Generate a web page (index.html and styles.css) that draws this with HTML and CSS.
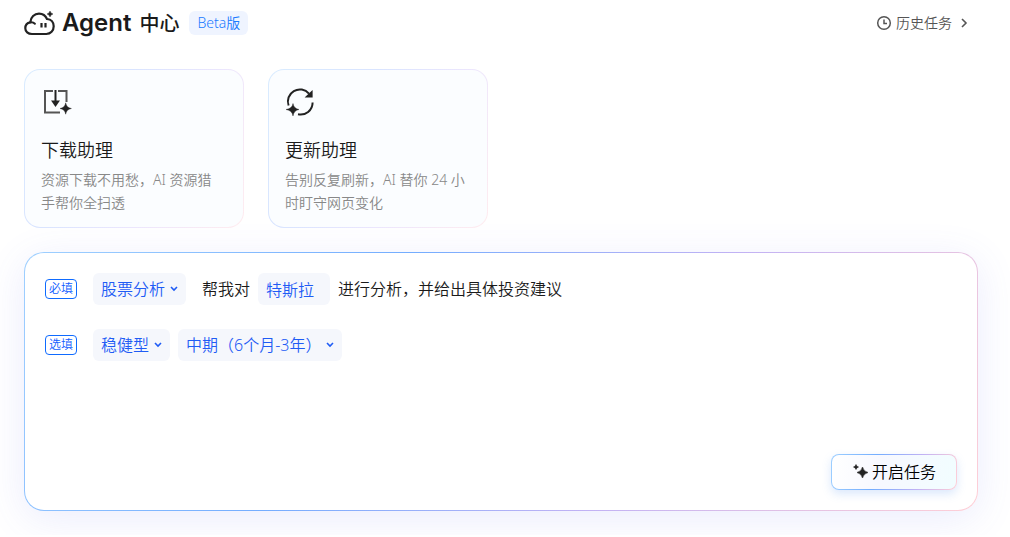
FILE: index.html
```html
<!DOCTYPE html>
<html lang="zh-CN">
    <head>
        <meta charset="UTF-8">
        <meta name="viewport" content="width=device-width, initial-scale=1.0">
        <title>Agent 中心</title>
        <link rel="stylesheet" href="styles.css">
    </head>
    <body>
        <header class="header">
            <svg class="logo" viewBox="0 0 32 28" aria-hidden="true">
                <path d="M8 25 C4 25 1.3 22.5 1.3 19.2 C1.3 16 3.5 13.8 6.3 13.3 C6.6 8 10.5 4.6 15 4.6 C18.8 4.6 21.6 6.6 23 10 C27.2 10.4 29.7 13.4 29.7 17.3 C29.7 21.8 26.6 25 22.3 25 Z" fill="none" stroke="#222" stroke-width="2.2"/>
                <path d="M6.3 13.3 C8.3 13 9.8 13.6 10.9 14.8" fill="none" stroke="#222" stroke-width="2" stroke-linecap="round"/>
                <path d="M17.5 14v4.500M21.5 14v4.500" stroke="#222" stroke-width="2.2"/>
                <path d="M26 2 Q26.6 4.4 29 5 Q26.6 5.6 26 8 Q25.4 5.6 23 5 Q25.4 4.4 26 2Z" fill="#222" stroke="#222" stroke-width="0.4"/>
            </svg>
            <h1 class="title"><span class="title-en">Agent</span> <span class="title-cn">中心</span></h1>
            <span class="beta">Beta版</span>
            <a class="history" href="#">
                <svg class="icon-clock" viewBox="0 0 16 16" aria-hidden="true">
                    <circle cx="8" cy="8" r="6.3"/>
                    <path d="M8 4.5v4h3"/>
                </svg>
                历史任务
                <svg class="icon-arrow" viewBox="0 0 8 12" aria-hidden="true"><path d="M2 2l4 4L2 10"/></svg>
            </a>
        </header>

        <main>
            <div class="cards">
                <a class="card" href="#">
                    <svg class="card-icon" viewBox="0 0 32 32" aria-hidden="true">
                        <path d="M12 5H4v21.5h15M17 5h8.5v11" fill="none" stroke="#555" stroke-width="2"/>
                        <path d="M14.5 4v12" fill="none" stroke="#222" stroke-width="2"/>
                        <path d="M10 14.5h9L14.5 21Z" fill="#222"/>
                        <path d="M24.7 16.8 Q25.5 21.7 30.4 22.5 Q25.5 23.3 24.7 28.2 Q23.9 23.3 19 22.5 Q23.9 21.7 24.7 16.8Z" fill="#222" stroke="#222" stroke-width="0.4"/>
                    </svg>
                    <h2>下载助理</h2>
                    <p>资源下载不用愁，AI 资源猎手帮你全扫透</p>
                </a>
                <a class="card" href="#">
                    <svg class="card-icon" viewBox="0 0 32 32" aria-hidden="true">
                        <path d="M3.6 19.5A12 12 0 0 1 24 7.6M27.6 16.5A12 12 0 0 1 13 28.3" fill="none" stroke="#222" stroke-width="2"/>
                        <path d="M27.6 4v7.5h-8Z" fill="#222"/>
                        <path d="M8 17.5 Q8.9 22.6 14 23.5 Q8.9 24.4 8 30 Q7.1 24.4 1 23.5 Q7.1 22.6 8 17.5Z" fill="#222" stroke="#222" stroke-width="0.4"/>
                    </svg>
                    <h2>更新助理</h2>
                    <p>告别反复刷新，AI 替你 24 小时盯守网页变化</p>
                </a>
            </div>

            <form class="panel">
                <div class="row">
                    <span class="tag">必填</span>
                    <div class="select-box">
                        <select class="field" aria-label="任务类型">
                            <option>股票分析</option>
                        </select>
                        <svg class="chevron" viewBox="0 0 8 6" aria-hidden="true"><path d="M1 1l3 3 3-3"/></svg>
                    </div>
                    <label class="text text-first" for="stock">帮我对</label>
                    <input class="field stock" id="stock" type="text" value="特斯拉">
                    <span class="text">进行分析，并给出具体投资建议</span>
                </div>
                <div class="row">
                    <span class="tag">选填</span>
                    <div class="select-box">
                        <select class="field" aria-label="投资风格">
                            <option>稳健型</option>
                        </select>
                        <svg class="chevron" viewBox="0 0 8 6" aria-hidden="true"><path d="M1 1l3 3 3-3"/></svg>
                    </div>
                    <div class="select-box">
                        <select class="field" aria-label="投资周期">
                            <option>中期（6个月-3年）</option>
                        </select>
                        <svg class="chevron" viewBox="0 0 8 6" aria-hidden="true"><path d="M1 1l3 3 3-3"/></svg>
                    </div>
                </div>
                <button class="start" type="submit">
                    <svg class="icon-star" viewBox="0 0 18 18" aria-hidden="true">
                        <path d="M10.5 4 Q11.5 8.5 16 9.5 Q11.5 10.5 10.5 15 Q9.5 10.5 5 9.5 Q9.5 8.5 10.5 4Z"/>
                        <path d="M4 1.5 Q4.5 3.5 6.5 4 Q4.5 4.5 4 6.5 Q3.5 4.5 1.5 4 Q3.5 3.5 4 1.5Z"/>
                    </svg>
                    开启任务
                </button>
            </form>
        </main>
    </body>
</html>
```
FILE: styles.css
```css
* {
    margin: 0;
    padding: 0;
    box-sizing: border-box;
}

body {
    font-family: "Noto Sans", "Noto Sans CJK SC", sans-serif;
    font-weight: 350;
    font-size: 16px;
    background-color: #fff;
    color: #1a1a1a;
    padding: 8px 32px 24px 24px;
}

a {
    color: inherit;
    text-decoration: none;
}

.header {
    display: flex;
    align-items: center;
    height: 30px;
}

.logo {
    width: 32px;
    height: 28px;
    margin-right: 6px;
}

.title {
    display: flex;
    align-items: baseline;
    gap: 8px;
    font-size: 20px;
    line-height: 30px;
}

.title-en {
    font-family: Inter, sans-serif;
    font-size: 24px;
    font-weight: 600;
}

.title-cn {
    font-weight: 500;
}

.beta {
    margin-left: 10px;
    padding: 0 8px;
    border-radius: 6px;
    background-color: #eff4ff;
    color: #1a7bff;
    font-size: 14px;
    line-height: 24px;
}

.history {
    display: flex;
    align-items: center;
    gap: 4px;
    margin-left: auto;
    padding-right: 10px;
    color: #555;
    font-size: 14px;
    line-height: 20px;
}

.icon-clock {
    width: 16px;
    height: 16px;
    fill: none;
    stroke: #555;
    stroke-width: 1.5;
}

.icon-arrow {
    width: 8px;
    height: 12px;
    margin-left: 4px;
    fill: none;
    stroke: #555;
    stroke-width: 1.6;
}

.cards {
    display: flex;
    gap: 24px;
    margin: 31px 0 24px;
}

.card {
    width: 220px;
    padding: 16px 18px 13px 16px;
    border: 1px solid transparent;
    border-radius: 16px;
    background: linear-gradient(#fbfdff, #fbfdff) padding-box,
        linear-gradient(120deg, #d9ecff, #d9e4ff 35%, #ece6fd 65%, #ffecef) border-box;
}

.card-icon {
    display: block;
    width: 32px;
    height: 32px;
}

.card h2 {
    margin-top: 18px;
    font-size: 18px;
    line-height: 28px;
    font-weight: 350;
}

.card p {
    margin-top: 4px;
    color: #888;
    font-size: 14px;
    line-height: 23px;
}

.panel {
    display: flex;
    flex-direction: column;
    gap: 24px;
    min-height: 259px;
    padding: 20px;
    border: 1px solid transparent;
    border-radius: 20px;
    background: linear-gradient(#fff, #fff) padding-box,
        linear-gradient(120deg, #9fd0ff, #74adff 35%, #c2b2f4 65%, #ffcfd6) border-box;
    box-shadow: 0 8px 40px rgba(90, 100, 240, 0.12);
}

.row {
    display: flex;
    align-items: center;
    gap: 8px;
}

.tag {
    margin-right: 8px;
    padding: 0 3px;
    border: 1px solid #0f6bff;
    border-radius: 4px;
    color: #0f5cff;
    font-size: 12px;
    line-height: 18px;
}

.text {
    line-height: 24px;
}

.select-box {
    position: relative;
}

.field {
    display: block;
    height: 32px;
    padding: 0 8px;
    border: none;
    border-radius: 6px;
    background-color: #f5f7fc;
    color: #1f5cf5;
    font: inherit;
    outline: none;
}

select.field {
    appearance: none;
    padding-right: 20px;
    cursor: pointer;
}

.chevron {
    position: absolute;
    right: 8px;
    top: 13px;
    width: 8px;
    height: 6px;
    fill: none;
    stroke: #1f5cf5;
    stroke-width: 1.6;
    pointer-events: none;
}

.text-first {
    margin-left: 8px;
}

.stock {
    width: 72px;
}

.start {
    display: flex;
    align-items: center;
    gap: 2px;
    height: 36px;
    margin-top: auto;
    margin-left: auto;
    padding: 0 20px;
    border: 1px solid transparent;
    border-radius: 8px;
    background: linear-gradient(100deg, #fff, #f7f8ff 40%, #f1fdff) padding-box,
        linear-gradient(100deg, #9fd0ff, #74adff 35%, #c2b2f4 70%, #ffcfd6) border-box;
    box-shadow: 0 4px 10px rgba(90, 150, 240, 0.22);
    color: #000;
    font: inherit;
    line-height: 24px;
    cursor: pointer;
}

.icon-star {
    width: 18px;
    height: 18px;
    fill: #222;
    stroke: #222;
    stroke-width: 0.6;
}
```
